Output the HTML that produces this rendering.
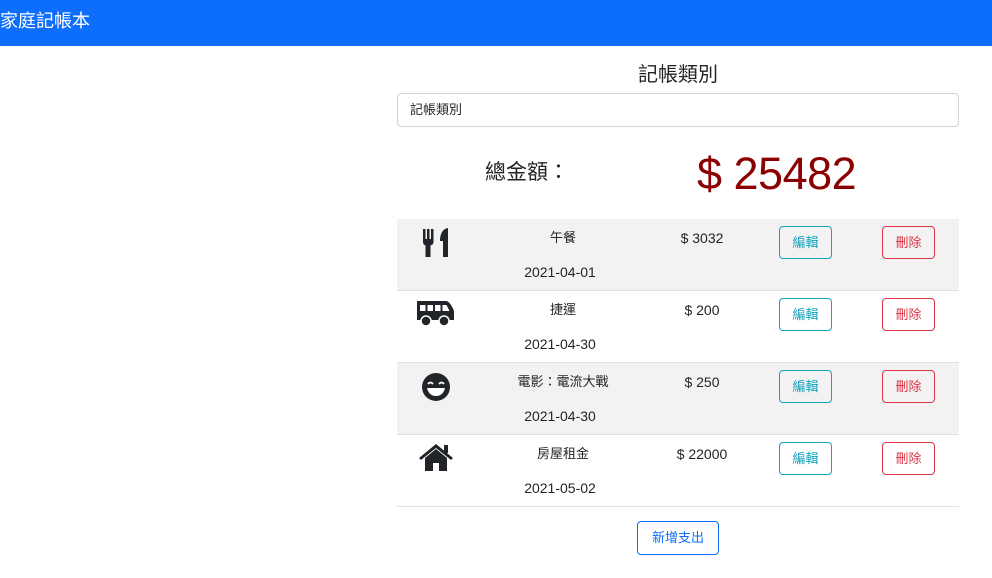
<!DOCTYPE html>
<html><head><meta charset="utf-8"><style>
*{box-sizing:border-box;margin:0;padding:0}
body{width:992px;height:578px;background:#fff;font-family:"Liberation Sans","Noto Sans CJK TC",sans-serif;color:#212529;position:relative;overflow:hidden}
.nav{position:absolute;left:0;top:0;width:992px;height:46px;background:#0d6efd;color:#fff;font-size:18px;line-height:42px;padding-left:0}
.ab{position:absolute}
.title{left:397px;width:562px;top:61px;text-align:center;font-size:20px;line-height:28px}
.inp{left:397px;top:93px;width:562px;height:34px;border:1px solid #ced4da;border-radius:4px;font-size:13px;line-height:32px;padding-left:12px}
.tl{left:485px;top:158px;font-size:21px;line-height:30px}
.tv{left:697px;top:147px;font-size:45px;line-height:54px;color:#8b0000;letter-spacing:-0.5px}
.row{position:absolute;left:397px;width:562px;height:72px;border-bottom:1px solid #dee2e6}
.g{background:#f2f2f2}
.ic{position:absolute;left:19px;top:4px;width:40px;height:34px}
.nm{position:absolute;left:116px;width:100px;text-align:center;top:9px;font-size:13px;line-height:20px}
.dt{position:absolute;left:113px;width:100px;text-align:center;top:43px;font-size:14px;line-height:20px}
.am{position:absolute;left:255px;width:100px;text-align:center;top:9px;font-size:14px;line-height:20px}
.b{position:absolute;top:7px;height:33px;width:53px;border:1px solid;border-radius:4px;font-size:13px;line-height:31px;text-align:center}
.e{left:382px;border-color:#17a2b8;color:#17a2b8}
.d{left:485px;border-color:#dc3545;color:#dc3545}
.add{left:637px;top:521px;width:82px;height:34px;border:1px solid #0d6efd;color:#0d6efd;border-radius:4px;font-size:13px;line-height:32px;text-align:center}
</style></head><body>
<div class="nav">家庭記帳本</div>
<div class="ab title">記帳類別</div>
<div class="ab inp">記帳類別</div>
<div class="ab tl">總金額：</div>
<div class="ab tv">$ 25482</div>

<div class="row g" style="top:219px">
<svg class="ic" viewBox="0 0 40 34"><path d="M7 6h2.5v10h1.5V6h2.5v10h1.5V6h2.5v13c0 2-1.5 3-3 3.5V34h-5V22.5C8.5 22 7 21 7 19z" fill="#212529"/><path d="M32 5c-6 1-8 7-8 13h3v16h5V5z" fill="#212529"/></svg>
<div class="nm">午餐</div><div class="dt">2021-04-01</div><div class="am">$ 3032</div>
<div class="b e">編輯</div><div class="b d">刪除</div></div>

<div class="row" style="top:291px">
<svg class="ic" viewBox="0 0 40 34"><path d="M1 6h29c3 0 6 5 8 10v9h-37z" fill="#212529"/><rect x="4" y="10" width="5.5" height="6" fill="#fff"/><rect x="11.5" y="10" width="5.5" height="6" fill="#fff"/><rect x="19" y="10" width="5.5" height="6" fill="#fff"/><path d="M26.5 10h4l3 6h-7z" fill="#fff"/><circle cx="10" cy="26" r="5" fill="#212529" stroke="#fff" stroke-width="1.5"/><circle cx="28" cy="26" r="5" fill="#212529" stroke="#fff" stroke-width="1.5"/></svg>
<div class="nm">捷運</div><div class="dt">2021-04-30</div><div class="am">$ 200</div>
<div class="b e">編輯</div><div class="b d">刪除</div></div>

<div class="row g" style="top:363px">
<svg class="ic" viewBox="0 0 40 34"><circle cx="20" cy="20" r="14" fill="#212529"/><path d="M12 17q2.5-3 5 0M23 17q2.5-3 5 0" stroke="#fff" stroke-width="1.8" fill="none"/><path d="M11 21h18q-2 8-9 8t-9-8z" fill="#fff"/></svg>
<div class="nm" style="left:96px;width:140px">電影：電流大戰</div><div class="dt">2021-04-30</div><div class="am">$ 250</div>
<div class="b e">編輯</div><div class="b d">刪除</div></div>

<div class="row" style="top:435px">
<svg class="ic" viewBox="0 0 40 34"><path d="M3 19L20 5l17 14-2 2-15-12L5 21z" fill="#212529"/><rect x="28" y="6" width="4" height="8" fill="#212529"/><path d="M9 19l11-9 11 9v13h-8v-8h-6v8H9z" fill="#212529"/></svg>
<div class="nm">房屋租金</div><div class="dt">2021-05-02</div><div class="am">$ 22000</div>
<div class="b e">編輯</div><div class="b d">刪除</div></div>

<div class="ab add">新增支出</div>
</body></html>
